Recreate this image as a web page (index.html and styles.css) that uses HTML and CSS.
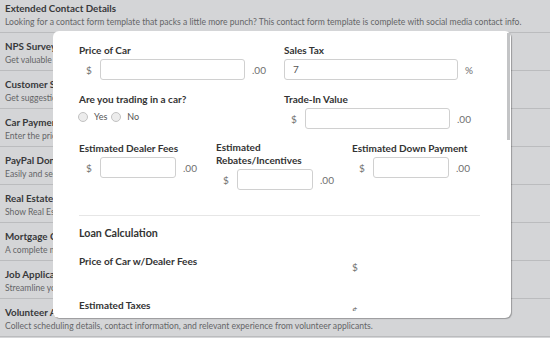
FILE: index.html
```html
<!DOCTYPE html>
<html>
<head>
<meta charset="utf-8">
<link rel="stylesheet" href="styles.css">
</head>
<body>
<ul class="list">
  <li class="item"><div class="title">Extended Contact Details</div><div class="desc">Looking for a contact form template that packs a little more punch? This contact form template is complete with social media contact info.</div></li>
  <li class="item"><div class="title">NPS Survey</div><div class="desc">Get valuable feedback from your customers with a net promoter score survey.</div></li>
  <li class="item"><div class="title">Customer Suggestion Form</div><div class="desc">Get suggestions and ideas from your customers to improve your business.</div></li>
  <li class="item"><div class="title">Car Payment Calculator</div><div class="desc">Enter the price of a car and let visitors calculate their monthly payments.</div></li>
  <li class="item"><div class="title">PayPal Donation Form</div><div class="desc">Easily and securely accept donations online through PayPal.</div></li>
  <li class="item"><div class="title">Real Estate Listing</div><div class="desc">Show Real Estate listings with photos, pricing and contact details.</div></li>
  <li class="item"><div class="title">Mortgage Calculator</div><div class="desc">A complete mortgage calculator for estimating monthly payments.</div></li>
  <li class="item"><div class="title">Job Application Form</div><div class="desc">Streamline your hiring process with an online job application.</div></li>
  <li class="item"><div class="title">Volunteer Application Form</div><div class="desc">Collect scheduling details, contact information, and relevant experience from volunteer applicants.</div></li>
</ul>

<div class="modal">
  <div class="viewport">
    <div class="content">
      <div class="row two">
        <div class="field">
          <div class="label">Price of Car</div>
          <div class="control"><span class="pre">$</span><span class="input w145"></span><span class="suf">.00</span></div>
        </div>
        <div class="field">
          <div class="label">Sales Tax</div>
          <div class="control"><span class="input w174 filled">7</span><span class="suf">%</span></div>
        </div>
      </div>

      <div class="row two">
        <div class="field">
          <div class="label">Are you trading in a car?</div>
          <div class="radios">
            <span class="radio"></span><span class="rlabel">Yes</span>
            <span class="radio"></span><span class="rlabel">No</span>
          </div>
        </div>
        <div class="field">
          <div class="label">Trade-In Value</div>
          <div class="control"><span class="pre">$</span><span class="input w145"></span><span class="suf">.00</span></div>
        </div>
      </div>

      <div class="row three">
        <div class="field">
          <div class="label">Estimated Dealer Fees</div>
          <div class="control"><span class="pre">$</span><span class="input w76"></span><span class="suf">.00</span></div>
        </div>
        <div class="field">
          <div class="label multi">Estimated<br>Rebates/Incentives</div>
          <div class="control"><span class="pre">$</span><span class="input w76"></span><span class="suf">.00</span></div>
        </div>
        <div class="field">
          <div class="label">Estimated Down Payment</div>
          <div class="control"><span class="pre">$</span><span class="input w76"></span><span class="suf">.00</span></div>
        </div>
      </div>

      <hr class="rule">

      <h2 class="section">Loan Calculation</h2>

      <div class="result">
        <div class="label">Price of Car w/Dealer Fees</div>
        <div class="value">$</div>
      </div>
      <div class="result">
        <div class="label">Estimated Taxes</div>
        <div class="value">$</div>
      </div>
    </div>
  </div>
  <div class="thumb"></div>
</div>
</body>
</html>
```
FILE: styles.css
```css
html, body {
  margin: 0;
  padding: 0;
  width: 550px;
  height: 338px;
  overflow: hidden;
  background: #d4d5d7;
  font-family: Lato, "Liberation Sans", sans-serif;
}

.list {
  list-style: none;
  margin: -5px 0 0;
  padding: 0;
}

.item {
  box-sizing: border-box;
  height: 38px;
  padding: 7px 5px 0;
  border-bottom: 1px solid #bbbcbe;
  white-space: nowrap;
}

.title {
  font-size: 9.8px;
  font-weight: 700;
  line-height: 12px;
  color: #38393b;
}

.desc {
  margin-top: 2px;
  font-size: 8.6px;
  line-height: 12px;
  color: #646567;
}

/* modal */
.modal {
  position: absolute;
  left: 53px;
  top: 31px;
  width: 458px;
  height: 287px;
  background: #fff;
  border-radius: 6px;
  box-shadow: 1px 1px 1px rgba(0, 0, 0, 0.28);
}

.viewport {
  height: 280px;
  overflow: hidden;
  border-radius: 6px 6px 0 0;
}

.content {
  padding: 12px 31px 0 26px;
}

.thumb {
  position: absolute;
  right: 1px;
  top: 2px;
  width: 3px;
  height: 107px;
  background: #c3c4c6;
}

.row {
  display: grid;
  margin-bottom: 12px;
}

.row.two {
  grid-template-columns: 205px 1fr;
}

.row.three {
  grid-template-columns: 137px 136px 1fr;
  margin-top: 2px;
}

.label {
  font-size: 10px;
  font-weight: 700;
  line-height: 14px;
  color: #333;
  white-space: nowrap;
}

.label.multi {
  line-height: 13px;
}

.field .label {
  margin-bottom: 2px;
}

.control {
  display: flex;
  align-items: center;
  height: 21px;
}

.pre {
  box-sizing: border-box;
  width: 21px;
  padding-left: 7px;
  font-size: 10px;
  color: #6f6f6f;
}

.suf {
  margin-left: 7px;
  font-size: 10px;
  color: #6f6f6f;
}

.input {
  box-sizing: border-box;
  height: 21px;
  border: 1px solid #d0d0d0;
  border-radius: 3px;
  background: #fff;
}

.input.filled {
  padding-left: 8px;
  font-size: 10px;
  line-height: 19px;
  color: #555;
}

.w145 { width: 145px; }
.w174 { width: 174px; }
.w76 { width: 76px; }

.radios {
  display: flex;
  align-items: center;
  height: 17px;
  margin-left: -1px;
}

.radio {
  box-sizing: border-box;
  width: 10px;
  height: 10px;
  border: 1px solid #c2c2c2;
  border-radius: 50%;
  background: #ececec;
  margin-right: 6px;
}

.rlabel {
  font-size: 9px;
  line-height: 11px;
  color: #555;
  margin-right: 4px;
}

.rule {
  margin: 25px 0 0;
  border: 0;
  height: 1px;
  background: #e6e6e6;
  width: 401px;
}

.section {
  margin: 9px 0 0;
  font-size: 10.7px;
  font-weight: 700;
  line-height: 16px;
  color: #333;
}

.result {
  display: grid;
  grid-template-columns: 273px 1fr;
  height: 44px;
}

.section + .result {
  margin-top: 13px;
}

.value {
  padding-top: 6px;
  font-size: 10px;
  line-height: 14px;
  color: #6f6f6f;
}
```
